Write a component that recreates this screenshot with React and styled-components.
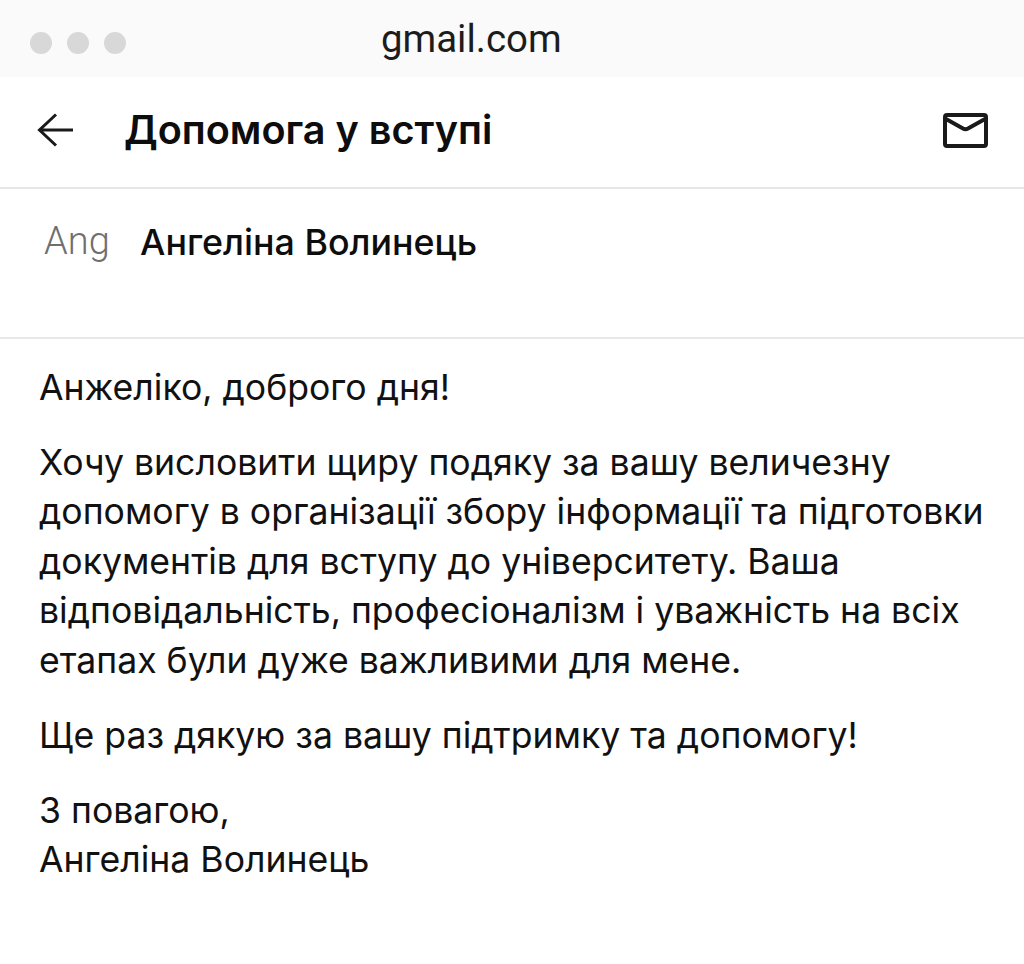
import React from "react";
import styled, { createGlobalStyle } from "styled-components";

const Global = createGlobalStyle`
  html, body {
    margin: 0;
    padding: 0;
    background: #fff;
  }
  body {
    font-family: Inter, Roboto, "Liberation Sans", sans-serif;
    color: #111;
  }
`;

const Page = styled.div`
  width: 1024px;
  height: 964px;
  overflow: hidden;
`;

const BrowserBar = styled.div`
  height: 77px;
  background: #fafafa;
  display: flex;
  align-items: center;
  padding-left: 30px;
  box-sizing: border-box;
`;

const Dots = styled.div`
  display: flex;
  gap: 15px;
  width: 96px;
  padding-top: 8px;
`;

const Dot = styled.span`
  width: 22px;
  height: 22px;
  border-radius: 50%;
  background: #d8d8d8;
  flex: none;
`;

const Domain = styled.div`
  margin-left: 255px;
  font-family: Roboto, sans-serif;
  font-size: 38.4px;
  line-height: 1;
  color: #1c1c1c;
  padding-top: 2px;
`;

const Header = styled.header`
  height: 112px;
  box-sizing: border-box;
  display: flex;
  align-items: center;
  padding: 0 36px 4px 37px;
  border-bottom: 2px solid #e6e6e6;
`;

const BackButton = styled.div`
  width: 87px;
  display: flex;
  align-items: center;
`;

const Title = styled.h1`
  flex: 1;
  margin: 0;
  font-size: 39.6px;
  font-weight: 600;
  color: #0d0d0d;
`;

const From = styled.div`
  height: 150px;
  display: flex;
  align-items: flex-start;
  padding: 31px 0 0 44px;
  box-sizing: border-box;
  border-bottom: 2px solid #e8e8e8;
`;

const Avatar = styled.span`
  width: 96px;
  margin-top: -1px;
  font-family: Roboto, sans-serif;
  font-size: 38px;
  font-weight: 300;
  color: #6f6f6f;
  line-height: 44px;
`;

const Sender = styled.span`
  font-size: 35.8px;
  font-weight: 500;
  color: #0d0d0d;
  line-height: 44px;
`;

const Body = styled.main`
  padding: 24px 30px 0 39px;
  font-size: 35.6px;
  line-height: 49.5px;
  color: #111;
`;

const Para = styled.p`
  margin: 0 0 25.4px;
`;

export default function App() {
  return (
    <Page>
      <Global />
      <BrowserBar>
        <Dots>
          <Dot />
          <Dot />
          <Dot />
        </Dots>
        <Domain>gmail.com</Domain>
      </BrowserBar>
      <Header>
        <BackButton>
          <svg width="36" height="34" viewBox="0 0 36 34" fill="none" stroke="#1a1a1a" strokeWidth="3">
            <path d="M36 17H3M19 1.5L2.5 17L19 32.5" />
          </svg>
        </BackButton>
        <Title>Допомога у вступі</Title>
        <svg width="45" height="35" viewBox="0 0 45 35" fill="none" stroke="#1a1a1a" strokeWidth="4" strokeLinejoin="round">
          <rect x="2" y="2" width="41" height="31" rx="2" />
          <path d="M3 6L20 15.5Q22.5 16.8 25 15.5L42 6" />
        </svg>
      </Header>
      <From>
        <Avatar>Ang</Avatar>
        <Sender>Ангеліна Волинець</Sender>
      </From>
      <Body>
        <Para>Анжеліко, доброго дня!</Para>
        <Para>
          Хочу висловити щиру подяку за вашу величезну
          <br />
          допомогу в організації збору інформації та підготовки
          <br />
          документів для вступу до університету. Ваша
          <br />
          відповідальність, професіоналізм і уважність на всіх
          <br />
          етапах були дуже важливими для мене.
        </Para>
        <Para>Ще раз дякую за вашу підтримку та допомогу!</Para>
        <Para>
          З повагою,
          <br />
          Ангеліна Волинець
        </Para>
      </Body>
    </Page>
  );
}
